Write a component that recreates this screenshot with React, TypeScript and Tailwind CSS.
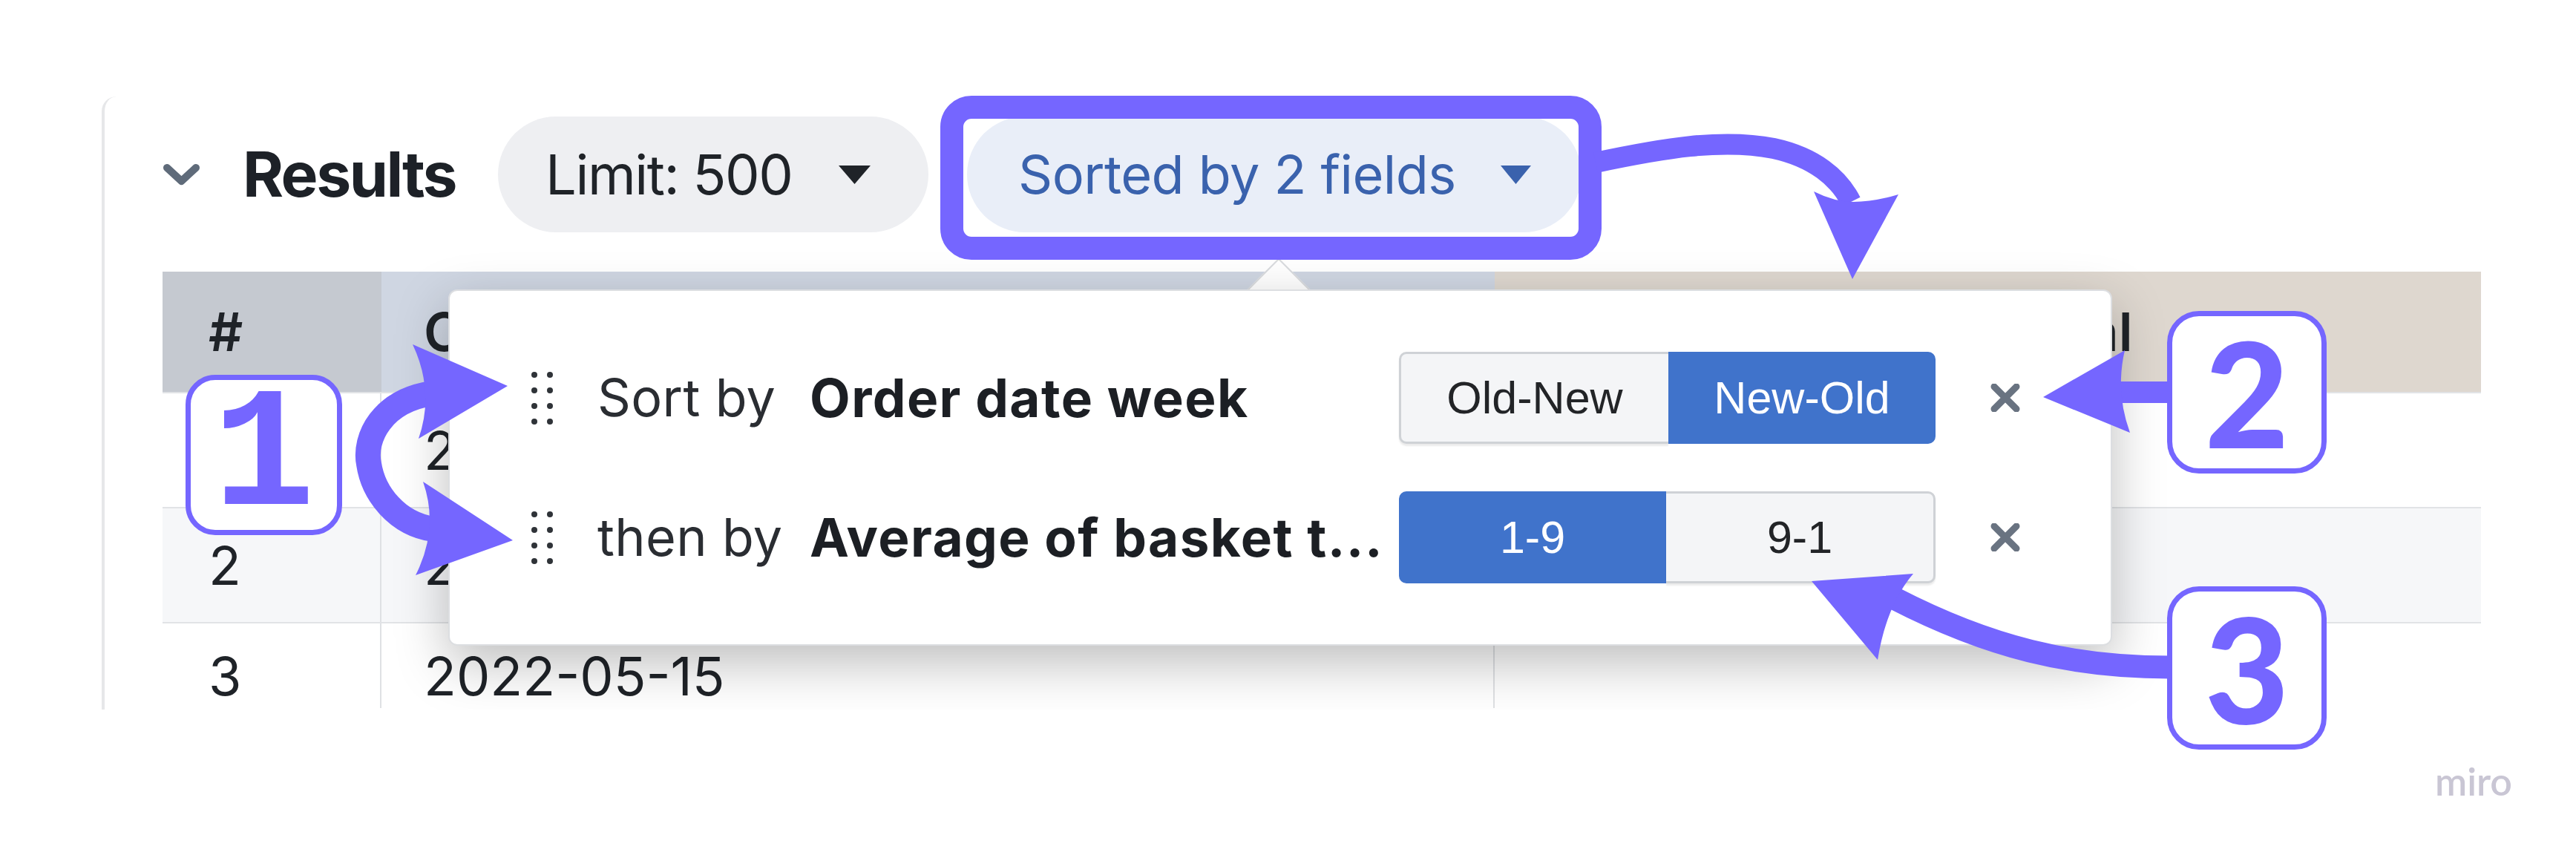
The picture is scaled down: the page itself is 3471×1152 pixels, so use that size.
import React from "react";

const PURPLE = "#7566FF";

function Tri({ color, w, h }: { color: string; w: number; h: number }) {
  return (
    <svg width={w} height={h} viewBox={`0 0 ${w} ${h}`} className="shrink-0">
      <polygon points={`0,0 ${w},0 ${w / 2},${h}`} fill={color} />
    </svg>
  );
}

function Handle() {
  return (
    <div className="grid grid-cols-2 gap-x-[13px] gap-y-[13px] w-[29px] shrink-0">
      {Array.from({ length: 8 }).map((_, i) => (
        <div key={i} className="w-[8px] h-[8px] rounded-full bg-[#2f3338]" />
      ))}
    </div>
  );
}

function CloseX() {
  return (
    <svg width="42" height="38" viewBox="0 0 42 38" className="shrink-0">
      <path d="M6 4 L36 34 M36 4 L6 34" stroke="#697381" strokeWidth="9" strokeLinecap="round" />
    </svg>
  );
}

function Seg({ left, right, activeLeft }: { left: string; right: string; activeLeft: boolean }) {
  const on = "bg-[#4073cb] text-white";
  const off = "bg-[#f4f5f7] text-[#222427] border-[3px] border-[#cfd2d6] shadow-[0_3px_2px_rgba(0,0,0,0.08)]";
  return (
    <div className="flex h-[124px] w-[723px] shrink-0 font-['Liberation_Sans',Arial,sans-serif] text-[61px] leading-none">
      <div
        className={`flex-1 flex items-center justify-center rounded-l-[10px] ${
          activeLeft ? on : off + " border-r-0"
        }`}
      >
        {left}
      </div>
      <div
        className={`flex-1 flex items-center justify-center rounded-r-[10px] ${
          activeLeft ? off + " border-l-0" : on
        }`}
      >
        {right}
      </div>
    </div>
  );
}

function SortRow({
  label,
  field,
  left,
  right,
  activeLeft,
}: {
  label: string;
  field: string;
  left: string;
  right: string;
  activeLeft: boolean;
}) {
  return (
    <div className="flex items-center h-[124px]">
      <div className="ml-[110px]">
        <Handle />
      </div>
      <div className="ml-[60px] w-[286px] shrink-0 text-[70px] leading-none text-[#2a2d32] tracking-[0.005em]">{label}</div>
      <div className="w-[794px] shrink-0 text-[71px] leading-none font-bold text-[#1c1f24] whitespace-nowrap tracking-[0.02em]">
        {field}
      </div>
      <Seg left={left} right={right} activeLeft={activeLeft} />
      <div className="ml-[73px]">
        <CloseX />
      </div>
    </div>
  );
}

export default function App() {
  return (
    <div className="relative w-[3471px] h-[1152px] bg-white overflow-hidden font-['Inter',sans-serif] text-[#1f2328]">
      {/* Screenshot panel */}
      <div className="relative ml-[137px] mt-[130px] w-[3206px] h-[826px] overflow-hidden border-l-[4px] border-[#e6e7e9] rounded-tl-[20px] bg-white">
        {/* Header */}
        <div className="flex items-center h-[156px] mt-[27px] pl-[78px]">
          <svg width="51" height="30" viewBox="0 0 51 30" className="shrink-0">
            <polyline points="6,6 25.5,24 45,6" fill="none" stroke="#5f6b7a" strokeWidth="10" strokeLinecap="round" strokeLinejoin="round" />
          </svg>
          <div className="ml-[57px] text-[84px] leading-none font-bold tracking-[-0.03em] text-[#1d2127]">Results</div>
          <div className="ml-[57px] flex items-center h-[156px] w-[580px] rounded-full bg-[#eeeff2] pl-[64px]">
            <span className="text-[74px] leading-none text-[#1f2328] tracking-[-0.02em]">Limit: 500</span>
            <div className="ml-auto mr-[78px]">
              <Tri color="#1f2328" w={43} h={25} />
            </div>
          </div>
          <div className="ml-[52px] flex items-center h-[156px] w-[828px] rounded-full bg-[#e9eef8] pl-[69px]">
            <span className="text-[72px] leading-none text-[#3a62ad] tracking-[-0.008em]">Sorted by 2 fields</span>
            <div className="ml-auto mr-[68px]">
              <Tri color="#3a62ad" w={41} h={25} />
            </div>
          </div>
        </div>

        {/* Table */}
        <div className="mt-[53px] ml-[78px] w-[3124px] text-[72px] leading-none">
          <div className="flex h-[162px] font-semibold">
            <div className="w-[295px] bg-[#c5c9d0] flex items-center pl-[62px]">#</div>
            <div className="w-[1500px] bg-[#cfd6e2] flex items-center pl-[57px] whitespace-nowrap">Order date week</div>
            <div className="flex-1 bg-[#ded7cf] flex items-center pl-[57px] whitespace-nowrap">Average of basket total</div>
          </div>
          <div className="flex h-[155px] border-t-2 border-[#e1e3e6] bg-white">
            <div className="w-[295px] border-r-2 border-[#dfe1e4]" />
            <div className="w-[1500px] flex items-center pl-[57px] border-r-2 border-[#dfe1e4]">2022-05-29</div>
            <div className="flex-1" />
          </div>
          <div className="flex h-[155px] border-t-2 border-[#e1e3e6] bg-[#f6f7f9]">
            <div className="w-[295px] flex items-center pl-[62px] border-r-2 border-[#dfe1e4]">2</div>
            <div className="w-[1500px] flex items-center pl-[57px] border-r-2 border-[#dfe1e4]">2022-05-22</div>
            <div className="flex-1" />
          </div>
          <div className="flex h-[116px] border-t-2 border-[#e1e3e6] bg-white">
            <div className="w-[295px] flex items-start pt-[35px] pl-[62px] border-r-2 border-[#dfe1e4]">3</div>
            <div className="w-[1500px] flex items-start pt-[35px] pl-[57px] border-r-2 border-[#dfe1e4]">2022-05-15</div>
            <div className="flex-1" />
          </div>
        </div>

        {/* Popover */}
        <div className="absolute left-[463px] top-[260px] w-[2242px] h-[480px]">
          <div className="absolute left-[1089px] top-[-30px] w-[60px] h-[60px] rotate-45 bg-white border-t-2 border-l-2 border-[#d9dbde]" />
          <div className="relative w-full h-full bg-white rounded-[12px] border-2 border-[#dcdee1] shadow-[0_24px_70px_rgba(0,0,0,0.26)] flex flex-col pt-[82px] gap-[64px]">
            <SortRow label="Sort by" field="Order date week" left="Old-New" right="New-Old" activeLeft={false} />
            <SortRow label="then by" field="Average of basket t..." left="1-9" right="9-1" activeLeft={true} />
          </div>
        </div>
      </div>

      {/* Highlight box around Sorted pill */}
      <div className="absolute left-[1267px] top-[129px] w-[891px] h-[221px] rounded-[42px] border-[31px] border-[#7566FF]" />

      {/* Arrows */}
      <svg className="absolute left-0 top-0 pointer-events-none" width="3471" height="1152" viewBox="0 0 3471 1152">
        {/* big arrow from sorted box */}
        <path d="M2150 219 C2240 200 2320 186 2390 200 C2445 212 2478 240 2494 272" fill="none" stroke={PURPLE} strokeWidth="28" />
        <path d="M2444 258 Q2472 272 2497 272 Q2525 272 2558 262 L2496 376 Z" fill={PURPLE} />
        {/* arrow 2 */}
        <path d="M2850 528.5 L2924 528.5" stroke={PURPLE} strokeWidth="29" />
        <path d="M2753 535 L2863 472 Q2850 528 2870 583 Z" fill={PURPLE} />
        {/* arrow 3 */}
        <path d="M2924 899 C2790 899 2680 872 2552 806" fill="none" stroke={PURPLE} strokeWidth="31" />
        <path d="M2441 783 L2578 773 Q2542 815 2530 889 Z" fill={PURPLE} />
        {/* arrow 1 (C-shape double) */}
        <path d="M582 530 C515 540 490 590 497 625 C503 665 535 706 584 713" fill="none" stroke={PURPLE} strokeWidth="34" />
        <path d="M684 520 L556 464 Q586 528 564 591 Z" fill={PURPLE} />
        <path d="M691 728 L570 649 Q592 712 560 775 Z" fill={PURPLE} />
      </svg>

      {/* Number boxes */}
      <div className="absolute left-[250px] top-[505px] w-[211px] h-[216px] rounded-[40px] border-[7px] border-[#7566FF] bg-white flex items-center justify-center">
        <span className="font-['Liberation_Mono',monospace] font-bold text-[230px] leading-[160px] text-[#7566FF] mt-[10px]">1</span>
      </div>
      <div className="absolute left-[2920px] top-[419px] w-[215px] h-[219px] rounded-[43px] border-[7px] border-[#7566FF] bg-white flex items-center justify-center">
        <span className="font-['Lato',sans-serif] font-black text-[196px] leading-[160px] text-[#7566FF]">2</span>
      </div>
      <div className="absolute left-[2920px] top-[790px] w-[215px] h-[220px] rounded-[43px] border-[7px] border-[#7566FF] bg-white flex items-center justify-center">
        <span className="font-['Lato',sans-serif] font-black text-[196px] leading-[160px] text-[#7566FF]">3</span>
      </div>

      {/* watermark */}
      <div className="absolute left-[3281px] top-[1026px] font-['Lato',sans-serif] font-semibold text-[52px] leading-none text-[#c9c6d4]">miro</div>
    </div>
  );
}
